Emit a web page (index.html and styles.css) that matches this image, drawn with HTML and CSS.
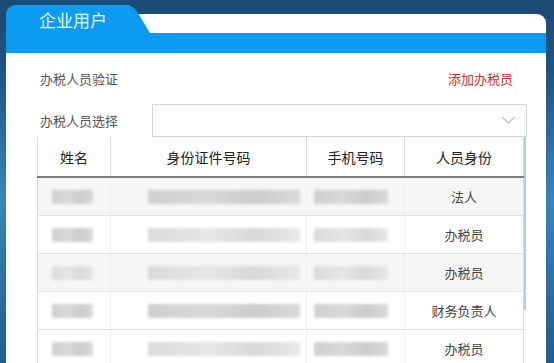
FILE: index.html
```html
<!DOCTYPE html>
<html lang="zh-CN">
<head>
  <meta charset="UTF-8" />
  <meta name="viewport" content="width=device-width, initial-scale=1.0" />
  <title>企业用户</title>
  <link rel="stylesheet" href="styles.css">
</head>
<body>

  <div class="card">
    <div class="tabbar">
      <div class="tab">企业用户</div>
      <div class="tabfill"></div>
    </div>
    <div class="bar"></div>

    <div class="content">
      <div class="row-title">
        <span class="label">办税人员验证</span>
        <a class="add-link">添加办税员</a>
      </div>

      <div class="row-select">
        <span class="label">办税人员选择</span>
        <div class="select">
          <svg class="chevron" viewBox="0 0 16 10" width="15" height="9">
            <path d="M1 1 L8 8 L15 1" fill="none" stroke="#b8b8b8" stroke-width="1.2" />
          </svg>
        </div>
      </div>

      <div class="table-wrap">
        <table class="staff">
          <thead>
            <tr>
              <th class="c-name">姓名</th>
              <th class="c-id">身份证件号码</th>
              <th class="c-phone">手机号码</th>
              <th class="c-role">人员身份</th>
            </tr>
          </thead>
          <tbody>
            <tr class="odd">
              <td><span class="mask m-name"></span></td>
              <td><span class="mask m-id"></span></td>
              <td><span class="mask m-phone"></span></td>
              <td>法人</td>
            </tr>
            <tr>
              <td><span class="mask m-name"></span></td>
              <td><span class="mask m-id light"></span></td>
              <td><span class="mask m-phone light"></span></td>
              <td>办税员</td>
            </tr>
            <tr class="odd">
              <td><span class="mask m-name light"></span></td>
              <td><span class="mask m-id light"></span></td>
              <td><span class="mask m-phone light"></span></td>
              <td>办税员</td>
            </tr>
            <tr>
              <td><span class="mask m-name"></span></td>
              <td><span class="mask m-id"></span></td>
              <td><span class="mask m-phone"></span></td>
              <td>财务负责人</td>
            </tr>
            <tr>
              <td><span class="mask m-name"></span></td>
              <td><span class="mask m-id light"></span></td>
              <td><span class="mask m-phone"></span></td>
              <td>办税员</td>
            </tr>
          </tbody>
        </table>
        <div class="scroll-thumb"></div>
      </div>
    </div>
  </div>

</body>
</html>
```

FILE: styles.css
```css
body {
  margin: 0;
  height: 363px;
  overflow: hidden;
  font-family: "Noto Sans CJK SC", "Noto Sans", sans-serif;
  background:
    linear-gradient(180deg, #1b4a74 0%, #1e5583 20%, #3a86b8 55%, #2c6e9e 80%, #1f5d8c 100%);
}

.card {
  width: 540px;
  margin: 5px 0 0 6px;
}

/* tab strip */
.tabbar {
  display: flex;
  height: 28px;
}

.tab {
  position: relative;
  z-index: 2;
  width: 124px;
  padding-left: 33px;
  box-sizing: border-box;
  background: #0d9af1;
  border-radius: 9px 0 0 0;
  color: #f2f8ff;
  font-size: 17px;
  line-height: 30px;
  white-space: nowrap;
}

.tab::after {
  content: "";
  position: absolute;
  top: 0;
  left: 114px;
  width: 30px;
  height: 100%;
  background: #0d9af1;
  border-radius: 0 7px 0 0;
  transform: skewX(31deg);
  transform-origin: bottom left;
  z-index: -1;
}

.tabfill {
  flex: 1;
  margin-top: 9px;
  background: #fff;
  border-radius: 0 9px 0 0;
}

.bar {
  height: 20px;
  background: #0d9af1;
}

/* body */
.content {
  background: #fff;
  height: 310px;
  padding: 17px 19px 0 31px;
  box-sizing: border-box;
}

.label {
  font-size: 13px;
  color: #555;
}

.row-title {
  display: flex;
  justify-content: space-between;
  align-items: center;
  height: 16px;
  padding: 0 14px 0 3px;
}

.add-link {
  font-size: 13px;
  color: #c4352f;
}

.row-select {
  display: flex;
  align-items: center;
  margin-top: 18px;
  padding-left: 3px;
}

.row-select .label {
  width: 112px;
}

.select {
  flex: 1;
  height: 33px;
  box-sizing: border-box;
  border: 1px solid #d4d4d4;
  display: flex;
  align-items: center;
  justify-content: flex-end;
  padding-right: 10px;
}

/* table */
.table-wrap {
  position: relative;
  width: 490px;
}

.staff {
  width: 487px;
  border-collapse: collapse;
  table-layout: fixed;
  font-size: 13px;
  color: #444;
}

.staff th {
  height: 39px;
  padding: 0;
  font-size: 14px;
  font-weight: 400;
  color: #222;
  border-left: 1px solid #dcdcdc;
  border-right: 1px solid #dcdcdc;
  border-bottom: 2px solid #7a7a7a;
}

.c-name { width: 72px; }
.c-id { width: 195px; }
.c-phone { width: 97px; }

.staff td {
  height: 37px;
  padding: 0;
  text-align: center;
  border-bottom: 1px solid #e2e2e2;
  border-left: 1px solid #f0f0f0;
  border-right: 1px solid #f0f0f0;
}

.staff td:first-child { border-left: 1px solid #dcdcdc; }
.staff td:last-child { border-right: 1px solid #dcdcdc; }

.staff tr.odd td {
  background: #f6f6f6;
}

.mask {
  display: block;
  height: 14px;
  background: linear-gradient(90deg, #cfcfcf, #d9d9d9 40%, #cbcbcb 70%, #dadada);
  filter: blur(1.5px);
  border-radius: 2px;
}

.mask.light {
  background: linear-gradient(90deg, #dadada, #e6e6e6 40%, #d8d8d8 70%, #e8e8e8);
}

.m-name { width: 41px; margin-left: 14px; }
.m-id { width: 152px; margin-left: 37px; }
.m-phone { width: 74px; margin-left: 7px; }

.scroll-thumb {
  position: absolute;
  top: 0;
  right: 1px;
  width: 2px;
  height: 173px;
  background: #a9d0ee;
}
```
